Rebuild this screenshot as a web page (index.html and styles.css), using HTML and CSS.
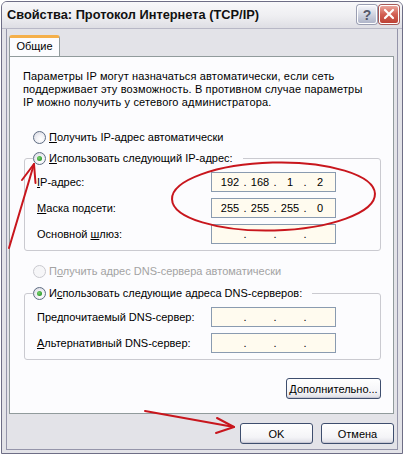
FILE: index.html
```html
<!DOCTYPE html>
<html>
<head>
<meta charset="utf-8">
<title>Свойства: Протокол Интернета (TCP/IP)</title>
<link rel="stylesheet" href="styles.css">
</head>
<body>
<div class="window">
  <div class="titlebar">
    <span class="title">Свойства: Протокол Интернета (TCP/IP)</span>
    <div class="tbtns">
      <span class="tbtn help">?</span>
      <span class="tbtn close"><svg width="18" height="17" viewBox="0 0 18 17"><path d="M5 4 L13 12 M13 4 L5 12" stroke="#fff" stroke-width="2.2" stroke-linecap="round"/></svg></span>
    </div>
  </div>
  <div class="frame">
    <div class="tabs"><div class="tab">Общие</div></div>
    <div class="panel">
      <p class="intro">Параметры IP могут назначаться автоматически, если сеть<br>поддерживает эту возможность. В противном случае параметры<br>IP можно получить у сетевого администратора.</p>
      <div class="radio-row first"><span class="radio"></span><span><u>П</u>олучить IP-адрес автоматически</span></div>
      <fieldset class="group g-ip">
        <legend><span class="radio checked"></span><span><u>И</u>спользовать следующий IP-адрес:</span></legend>
        <div class="rows">
          <div class="field"><span class="lbl"><u>I</u>P-адрес:</span>
            <div class="ipbox"><span class="oct">192</span><span class="dot">.</span><span class="oct">168</span><span class="dot">.</span><span class="oct">1</span><span class="dot">.</span><span class="oct">2</span></div></div>
          <div class="field"><span class="lbl"><u>М</u>аска подсети:</span>
            <div class="ipbox"><span class="oct">255</span><span class="dot">.</span><span class="oct">255</span><span class="dot">.</span><span class="oct">255</span><span class="dot">.</span><span class="oct">0</span></div></div>
          <div class="field"><span class="lbl">Основной <u>ш</u>люз:</span>
            <div class="ipbox"><span class="oct"></span><span class="dot">.</span><span class="oct"></span><span class="dot">.</span><span class="oct"></span><span class="dot">.</span><span class="oct"></span></div></div>
        </div>
      </fieldset>
      <div class="radio-row disabled"><span class="radio"></span><span>П<u>о</u>лучить адрес DNS-сервера автоматически</span></div>
      <fieldset class="group g-dns">
        <legend><span class="radio checked"></span><span>И<u>с</u>пользовать следующие адреса DNS-серверов:</span></legend>
        <div class="rows">
          <div class="field"><span class="lbl">Пре<u>д</u>почитаемый DNS-сервер:</span>
            <div class="ipbox"><span class="oct"></span><span class="dot">.</span><span class="oct"></span><span class="dot">.</span><span class="oct"></span><span class="dot">.</span><span class="oct"></span></div></div>
          <div class="field"><span class="lbl"><u>А</u>льтернативный DNS-сервер:</span>
            <div class="ipbox"><span class="oct"></span><span class="dot">.</span><span class="oct"></span><span class="dot">.</span><span class="oct"></span><span class="dot">.</span><span class="oct"></span></div></div>
        </div>
      </fieldset>
      <div class="adv-row"><button class="btn adv"><u>Д</u>ополнительно...</button></div>
    </div>
    <div class="footer">
      <button class="btn">OK</button>
      <button class="btn">Отмена</button>
    </div>
  </div>
</div>
<svg class="annot" width="404" height="455" viewBox="0 0 404 455">
  <g fill="none" stroke="#C8161D" stroke-width="2" stroke-linecap="round" stroke-linejoin="round">
    <ellipse cx="273.5" cy="196.5" rx="101.5" ry="34" transform="rotate(-1.5 273.5 196.5)"/>
    <path d="M9 248 L34 164"/>
    <path d="M22 180 L34 164 L35.5 183"/>
    <path d="M145 411 L234 427"/>
    <path d="M217 418 L234 427 L216 433"/>
  </g>
</svg>
</body>
</html>
```
FILE: styles.css
```css
* { box-sizing: border-box; }
html, body { margin: 0; padding: 0; }
body {
  position: relative;
  width: 404px;
  height: 455px;
  overflow: hidden;
  background: #ffffff;
  font-family: "Liberation Sans", Arial, sans-serif;
  font-size: 11px;
  color: #000;
}
u { text-decoration: underline; text-underline-offset: 1px; }

.window {
  margin: 1px 0 0 1px;
  width: 402px;
  height: 453px;
  border: 1px solid #6E6E86;
  border-radius: 6px 6px 0 0;
  background: #E3E3E8;
  display: flex;
  flex-direction: column;
}
.titlebar {
  flex: none;
  height: 27px;
  display: flex;
  justify-content: space-between;
  align-items: flex-start;
  padding: 3px 3px 0 5px;
  background: linear-gradient(#F8F8FA, #EEEEF1 55%, #DEDEE4);
  border-bottom: 1px solid #B8B8C6;
  border-radius: 5px 5px 0 0;
}
.title {
  font-weight: bold;
  font-size: 12.8px;
  line-height: 20px;
  color: #111;
}
.tbtns { display: flex; gap: 2px; }
.tbtn {
  width: 20px;
  height: 19px;
  border-radius: 3px;
  border: 1px solid #FFFFFF;
  box-shadow: 0 0 0 1px #9A9EB2;
  display: flex;
  align-items: center;
  justify-content: center;
}
.help {
  background: linear-gradient(#F4F5FA, #CDD1DE 55%, #AFB5C9);
  font-weight: bold;
  font-size: 14px;
  color: #55586A;
  line-height: 1;
}
.close {
  background: linear-gradient(#EBA59B, #D25E52 50%, #BD4236);
  box-shadow: 0 0 0 1px #A85A58;
}

.frame {
  flex: 1;
  margin: 0 4px 3px 4px;
  border: 1px solid #9595AA;
  border-top: none;
  padding: 0 3px 0 2px;
  display: flex;
  flex-direction: column;
}
.tabs {
  display: flex;
  height: 21px;
  margin-top: 6px;
  flex: none;
}
.tab {
  position: relative;
  z-index: 1;
  width: 51px;
  height: 21px;
  margin-bottom: -1px;
  background: #FCFCFE;
  border: 1px solid #919B9C;
  border-top: 3px solid #F5B04A;
  border-bottom: none;
  border-radius: 3px 3px 0 0;
  text-align: center;
  line-height: 16px;
}
.panel {
  flex: none;
  height: 358px;
  background: #FCFCFE;
  border: 1px solid #919B9C;
  padding: 13px 12px 0 13px;
}
.intro {
  margin: 0;
  line-height: 13px;
  letter-spacing: 0.15px;
}
.radio-row {
  display: flex;
  align-items: center;
  gap: 3px;
  height: 16px;
  margin-left: 10px;
}
.radio-row.first { margin-top: 20px; }
.radio-row.disabled { margin-top: 12px; color: #A3A3A3; }
.radio {
  flex: none;
  width: 13px;
  height: 13px;
  border-radius: 50%;
  border: 1px solid #5E6C82;
  background: radial-gradient(circle at 60% 65%, #FFFFFF 0, #F2F2F6 40%, #D2D4DE 100%);
  display: flex;
  align-items: center;
  justify-content: center;
}
.radio.checked::after {
  content: "";
  width: 5px;
  height: 5px;
  border-radius: 50%;
  background: radial-gradient(circle at 40% 40%, #7BD36F, #2E9A2E 70%, #1E7A1E);
}
.disabled .radio {
  border-color: #C9C9CF;
  background: #F6F6F8;
}

.group {
  margin: 5px 0 0 1px;
  padding: 0;
  border: 1px solid #CACAD0;
  border-radius: 3px;
  min-width: 0;
}
.group.g-dns { margin-top: 6px; }
.group legend {
  display: flex;
  align-items: center;
  gap: 3px;
  height: 16px;
  margin-left: 8px;
  padding: 0 10px 0 0;
}
.rows {
  display: flex;
  flex-direction: column;
  gap: 6px;
  padding: 6px 0 6px 12px;
}
.field {
  display: grid;
  grid-template-columns: 174px 125px;
  align-items: center;
  height: 20px;
}
.ipbox {
  display: flex;
  height: 20px;
  border: 1px solid #8A9BB0;
  background: #FFFBEF;
  padding-left: 6px;
  line-height: 18px;
}
.oct { width: 24px; text-align: center; }
.dot { width: 6px; text-align: center; }

.adv-row {
  display: flex;
  justify-content: flex-end;
  margin-top: 18px;
}
.btn {
  height: 21px;
  width: 73px;
  padding: 0;
  font-family: "Liberation Sans", Arial, sans-serif;
  font-size: 11px;
  color: #000;
  border: 1px solid #3E4E6E;
  border-radius: 3px;
  background: linear-gradient(#FFFFFF, #F4F4F7 70%, #DCDCE4);
  box-shadow: inset 0 -1px 0 #C8C8D4;
}
.btn.adv { width: 95px; }
.footer {
  display: flex;
  justify-content: flex-end;
  gap: 8px;
  margin-top: 9px;
}
.annot {
  position: absolute;
  left: 0;
  top: 0;
  pointer-events: none;
}
```
